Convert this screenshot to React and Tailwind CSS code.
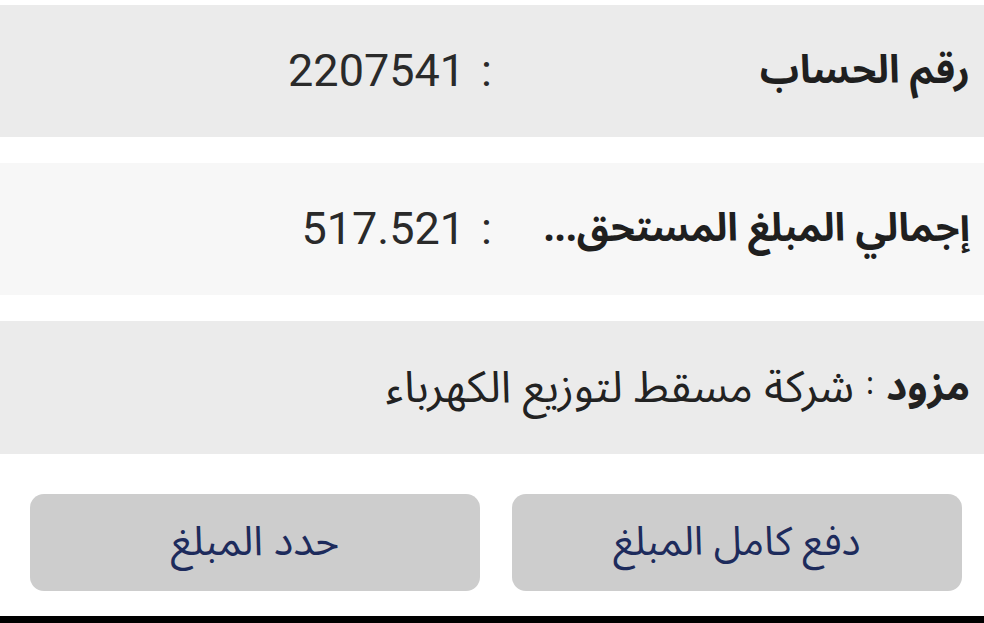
import React from "react";

const arabic = { fontFamily: '"Noto Sans Arabic", "DejaVu Sans", "Noto Sans", sans-serif' };
const digits = { fontFamily: 'Roboto, "Liberation Sans", sans-serif' };

const rows = [
  { label: "رقم الحساب", value: "2207541", bg: "bg-[#ebebeb]" },
  { label: "إجمالي المبلغ المستحق...", value: "517.521", bg: "bg-[#f7f7f7]" },
];

const InfoRow = ({ label, value, bg }) => (
  <div className={`h-[132px] grid grid-cols-2 items-center ${bg}`}>
    <div className="pr-[14px] text-[39px] leading-[60px] font-bold text-[#1f1f1f] whitespace-nowrap" style={arabic}>
      {label}
    </div>
    <div className="text-[45px] leading-[60px] text-[#2a2a2a] flex gap-[16px]" style={digits}>
      <span>:</span>
      <span dir="ltr">{value}</span>
    </div>
  </div>
);

export default function App() {
  return (
    <div dir="rtl" className="w-[984px] h-[623px] bg-white flex flex-col overflow-hidden">
      <div className="pt-[5px] flex flex-col gap-[26px]">
        {rows.map((r) => (
          <InfoRow key={r.label} {...r} />
        ))}
        <div className="h-[133px] bg-[#ebebeb] flex items-center pr-[14px] text-[44px] text-[#222] whitespace-nowrap" style={arabic}>
          <span className="font-bold text-[41px]">مزود</span>
          <span className="mx-[12px] text-[30px] -mt-[6px]">:</span>
          <span>شركة مسقط لتوزيع الكهرباء</span>
        </div>
      </div>

      {/* buttons */}
      <div className="mt-[40px] pr-[22px] pl-[30px] flex gap-[32px]">
        <button className="flex-1 h-[97px] rounded-[14px] bg-[#cdcdcd] text-[40px] text-[#1d2b5c]" style={arabic}>
          دفع كامل المبلغ
        </button>
        <button className="flex-1 h-[97px] rounded-[14px] bg-[#cdcdcd] text-[41px] text-[#1d2b5c]" style={arabic}>
          حدد المبلغ
        </button>
      </div>

      <div className="flex-1" />
      <div className="h-[7px] bg-black" />
    </div>
  );
}
